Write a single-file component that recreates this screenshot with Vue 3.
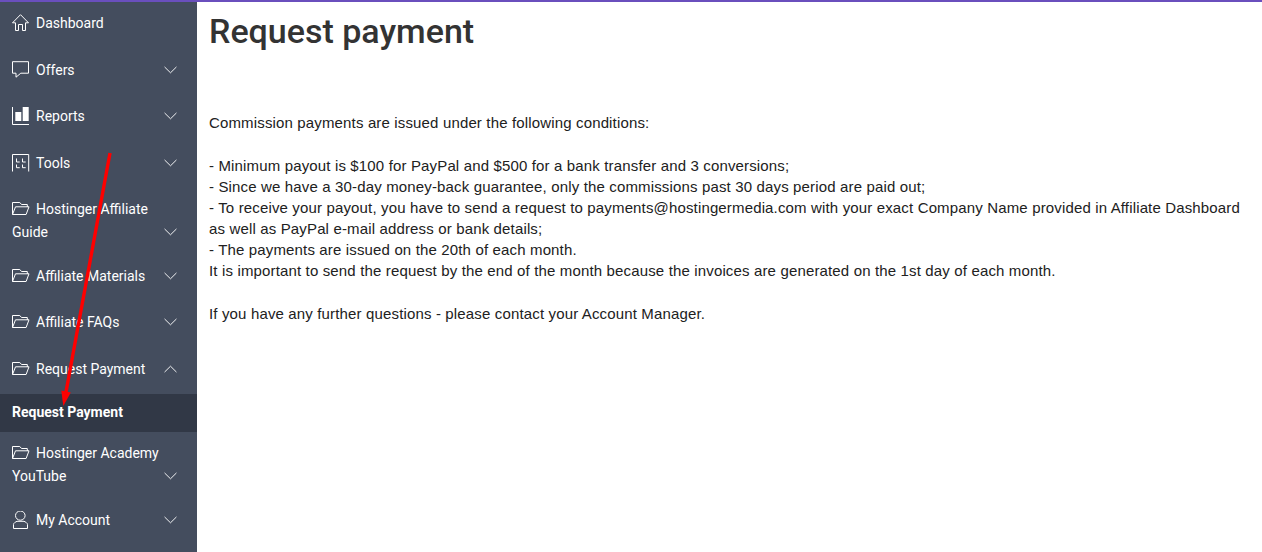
<script setup>
const menu = [
  { label: 'Dashboard', icon: 'home' },
  { label: 'Offers', icon: 'chat', arrow: 'down' },
  { label: 'Reports', icon: 'chart', arrow: 'down' },
  { label: 'Tools', icon: 'tools', arrow: 'down' },
  { label: 'Hostinger Affiliate Guide', icon: 'folder', arrow: 'down', wrap: true },
  { label: 'Affiliate Materials', icon: 'folder', arrow: 'down' },
  { label: 'Affiliate FAQs', icon: 'folder', arrow: 'down' },
  { label: 'Request Payment', icon: 'folder', arrow: 'up', sub: 'Request Payment' },
  { label: 'Hostinger Academy YouTube', icon: 'folder', arrow: 'down', wrap: true },
  { label: 'My Account', icon: 'user', arrow: 'down' }
]
</script>

<template>
  <div class="page">
    <aside class="sidebar">
      <template v-for="item in menu" :key="item.label">
        <a class="item" :class="{ wrap: item.wrap }">
          <svg class="icon" width="18" height="18" viewBox="0 0 18 18" fill="none" stroke="#fff" stroke-width="1">
            <path v-if="item.icon === 'home'" d="M.5 8.8 8.5.7l8 8.1h-3v7.7h-3v-6h-4v6h-3V8.8z" />
            <path v-else-if="item.icon === 'chat'" d="M.5.7h16v11.500H8.800l-4.800 4v-4H.5z" />
            <template v-else-if="item.icon === 'chart'">
              <path d="M.5 0v17.500H17" />
              <path d="M3.300 5h6v9h-6zM10.700 0h6v14h-6z" fill="#fff" stroke="none" />
            </template>
            <path v-else-if="item.icon === 'tools'" d="M.5 17.500V.5h16.200v17M4.500 4.500V8h3.200M10.500 4.500V8h3.200M4.500 10.500V13.700h3.200M10.500 10.500V13.700h3.200" />
            <path v-else-if="item.icon === 'folder'" d="M.5 14.500v-12h7.300l1.700 2h5.800V7M.5 14.500h13.600L17 6.800H3.500z" />
            <path v-else d="M3.500 4.600a4.800 4.600 0 1 0 9.600 0a4.800 4.600 0 1 0-9.600 0M1.500 17.500v-4c0-1.500 2-2.500 3.500-3.200h7c1.500.7 3.500 1.700 3.500 3.200v4z" />
          </svg>
          <span>{{ item.label }}</span>
          <svg v-if="item.arrow" class="arrow" :class="{ up: item.arrow === 'up' }" width="13" height="8" viewBox="0 0 14 8" fill="none" stroke="#fff" stroke-width="1">
            <path d="M.6.7 7 7l6.400-6.300" />
          </svg>
        </a>
        <a v-if="item.sub" class="sub">{{ item.sub }}</a>
      </template>
    </aside>
    <main class="content">
      <h1>Request payment</h1>
      <p>Commission payments are issued under the following conditions:</p>
      <p>
        - Minimum payout is $100 for PayPal and $500 for a bank transfer and 3 conversions;<br />
        - Since we have a 30-day money-back guarantee, only the commissions past 30 days period are paid out;<br />
        - To receive your payout, you have to send a request to payments@hostingermedia.com with your exact Company Name provided in Affiliate Dashboard as well as PayPal e-mail address or bank details;<br />
        - The payments are issued on the 20th of each month.<br />
        It is important to send the request by the end of the month because the invoices are generated on the 1st day of each month.
      </p>
      <p>If you have any further questions - please contact your Account Manager.</p>
    </main>
    <!-- red annotation arrow drawn over the screenshot -->
    <svg class="annotation" width="130" height="420" viewBox="0 0 130 420">
      <path d="M110 153 66 392" stroke="#f00" stroke-width="3.4" fill="none" />
      <path d="M63.300 406 61.300 390.500 70.800 392.500z" fill="#f00" />
    </svg>
  </div>
</template>

<style>
html, body { margin: 0; background: #fff; }
</style>

<style scoped>
.page {
  position: relative;
  display: flex;
  height: 552px;
  overflow: hidden;
  border-top: 2px solid #6a4fbd;
  box-sizing: border-box;
  font-family: Roboto, sans-serif;
}
.sidebar {
  width: 197px;
  flex-shrink: 0;
  background: #444d5e;
  color: #fff;
  font-size: 14px;
  line-height: 23px;
}
.item {
  display: block;
  position: relative;
  padding: 10px 24px 13.5px 12px;
}
.item.wrap { padding-bottom: 10.5px; }
.icon { vertical-align: -4px; margin-right: 6px; }
.arrow {
  position: absolute;
  right: 20px;
  bottom: 21.5px;
}
.item.wrap .arrow { bottom: 19px; }
.arrow.up { transform: rotate(180deg); }
.sub {
  display: block;
  background: #313846;
  font-size: 14px;
  font-weight: 700;
  padding: 7px 12px 8px;
}
.content {
  flex: 1;
  padding: 0 12px;
  color: #212121;
  font-family: "Liberation Sans", Arial, sans-serif;
  font-size: 15px;
  line-height: 21px;
  letter-spacing: 0.15px;
}
h1 {
  margin: 7px 0 59px;
  font-family: Roboto, sans-serif;
  font-size: 34px;
  line-height: 44px;
  font-weight: 500;
  letter-spacing: 0;
  color: #333;
}
p { margin: 0 0 22px; }
.annotation {
  position: absolute;
  left: 0;
  top: -2px;
  overflow: visible;
}
</style>
